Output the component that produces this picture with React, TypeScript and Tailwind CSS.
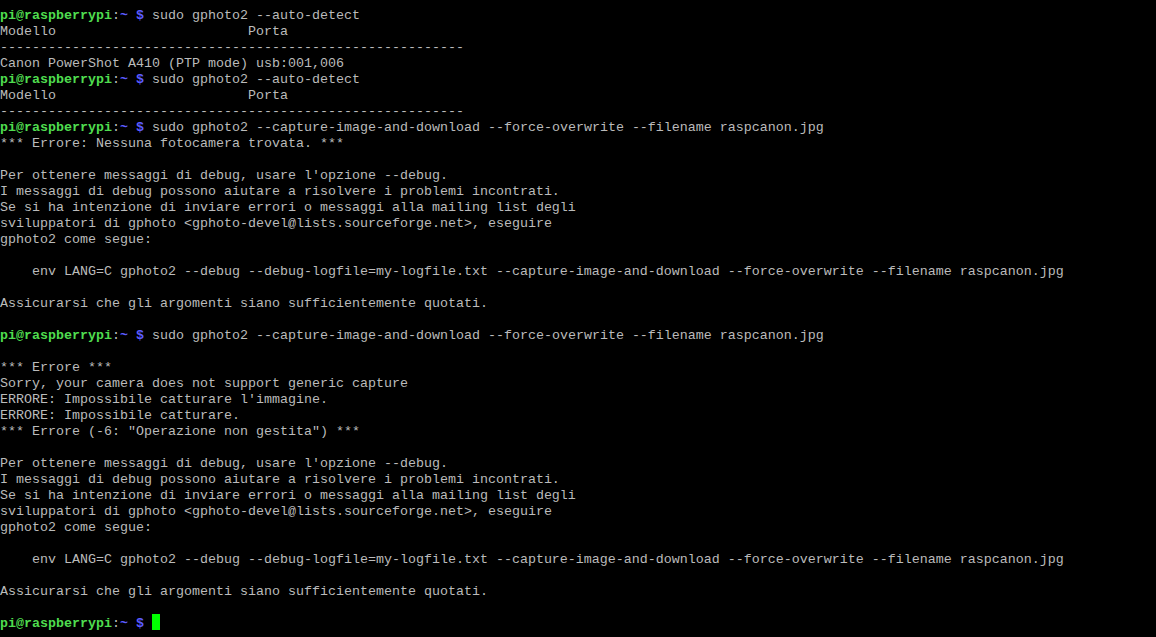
const Prompt = ({ cmd, cursor }: { cmd?: string; cursor?: boolean }) => (
  <div>
    <span className="text-[#4fdc4f] font-bold">pi@raspberrypi</span>
    <span className="text-[#bbbbbb]">:</span>
    <span className="text-[#5c5cff] font-bold">~ $</span>
    {cmd !== undefined && <span> {cmd}</span>}
    {cursor && (
      <>
        <span> </span>
        <span className="relative -top-[2px] inline-block w-[8px] h-[16px] align-top bg-[#00ff00]" />
      </>
    )}
  </div>
);

const Line = ({ text = '' }: { text?: string }) => <div className="h-4">{text}</div>;

const debugBlock = [
  "Per ottenere messaggi di debug, usare l'opzione --debug.",
  'I messaggi di debug possono aiutare a risolvere i problemi incontrati.',
  'Se si ha intenzione di inviare errori o messaggi alla mailing list degli',
  'sviluppatori di gphoto <gphoto-devel@lists.sourceforge.net>, eseguire',
  'gphoto2 come segue:',
  '',
  '    env LANG=C gphoto2 --debug --debug-logfile=my-logfile.txt --capture-image-and-download --force-overwrite --filename raspcanon.jpg',
  '',
  'Assicurarsi che gli argomenti siano sufficientemente quotati.',
  '',
];

const dashes = '-'.repeat(58);
const capture = 'sudo gphoto2 --capture-image-and-download --force-overwrite --filename raspcanon.jpg';

export default function App() {
  return (
    <div className="w-[1156px] h-[637px] overflow-hidden bg-black pt-[8px] text-[#bbbbbb] font-['Courier_New','Liberation_Mono',monospace] text-[13.333px] leading-4 whitespace-pre">
      <Prompt cmd="sudo gphoto2 --auto-detect" />
      <Line text="Modello                        Porta" />
      <Line text={dashes} />
      <Line text="Canon PowerShot A410 (PTP mode) usb:001,006" />
      <Prompt cmd="sudo gphoto2 --auto-detect" />
      <Line text="Modello                        Porta" />
      <Line text={dashes} />
      <Prompt cmd={capture} />
      <Line text="*** Errore: Nessuna fotocamera trovata. ***" />
      <Line />
      {debugBlock.map((t, i) => (
        <Line key={'a' + i} text={t} />
      ))}
      <Prompt cmd={capture} />
      <Line />
      <Line text="*** Errore ***" />
      <Line text="Sorry, your camera does not support generic capture" />
      <Line text="ERRORE: Impossibile catturare l'immagine." />
      <Line text="ERRORE: Impossibile catturare." />
      <Line text={'*** Errore (-6: "Operazione non gestita") ***'} />
      <Line />
      {debugBlock.map((t, i) => (
        <Line key={'b' + i} text={t} />
      ))}
      <Prompt cursor />
    </div>
  );
}
